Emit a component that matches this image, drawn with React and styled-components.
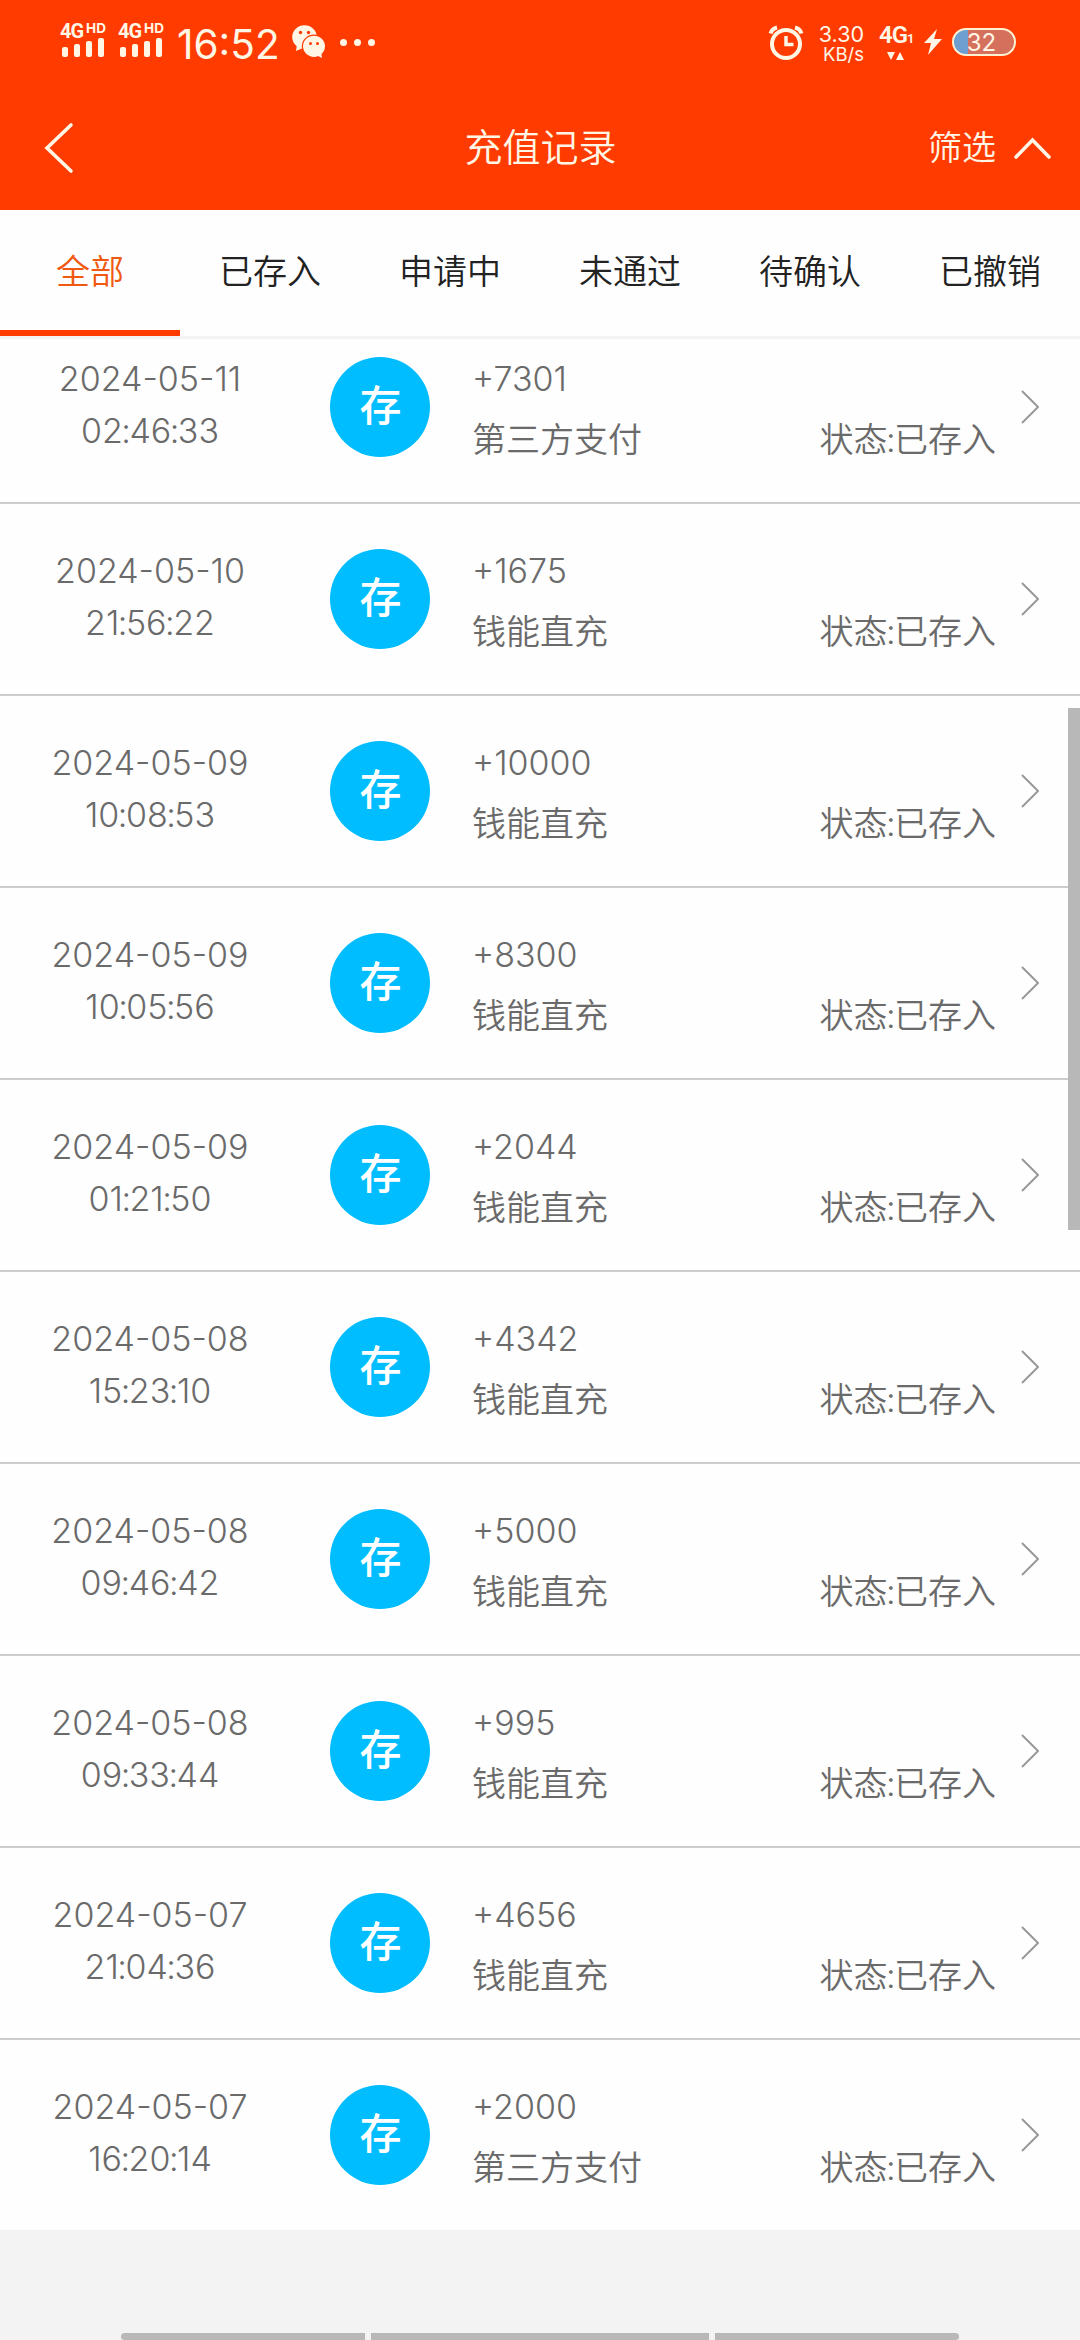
import React from "react";
import styled, { createGlobalStyle } from "styled-components";

const GlobalStyle = createGlobalStyle`
  * {
    box-sizing: border-box;
  }
  body {
    margin: 0;
    background-color: #f3f3f3;
    font-family: Inter, "Noto Sans CJK SC", sans-serif;
    font-weight: 350;
  }
`;

const Page = styled.div`
  position: relative;
  width: 1080px;
  height: 2340px;
  overflow: hidden;
  display: flex;
  flex-direction: column;
  background-color: #f3f3f3;
`;

const StatusBar = styled.div`
  height: 84px;
  padding: 0 64px 0 60px;
  display: flex;
  align-items: center;
  justify-content: space-between;
  background-color: #ff3b00;
  color: #fff6e6;
  .side {
    display: flex;
    align-items: center;
  }
`;

const Signal = styled.div`
  width: 46px;
  margin-right: 12px;
  margin-top: -6px;
  .net {
    display: flex;
    align-items: flex-start;
    height: 17px;
    font-family: Roboto, sans-serif;
    font-size: 20px;
    line-height: 20px;
    font-weight: 700;
    letter-spacing: -1px;
  }
  .net sup {
    font-family: Inter, sans-serif;
    font-size: 13.5px;
    line-height: 14px;
    letter-spacing: 0;
    margin-left: 3px;
  }
  .bars {
    display: flex;
    align-items: flex-end;
    gap: 6px;
    height: 19px;
    padding-left: 2px;
  }
`;

const Bar = styled.i`
  width: 6px;
  height: ${(props) => props.$height}px;
  border-radius: 2px;
  background-color: #fff6e6;
`;

const Clock = styled.span`
  width: 106px;
  margin-left: 1px;
  font-size: 40.5px;
  line-height: 84px;
  font-weight: 400;
  letter-spacing: 0;
  padding-top: 5px;
  white-space: nowrap;
`;

const WechatIcon = styled.svg`
  width: 34px;
  height: 34px;
  margin-left: 9px;
`;

const Dots = styled.div`
  display: flex;
  gap: 7px;
  margin-left: 14px;
  i {
    width: 7px;
    height: 7px;
    border-radius: 50%;
    background-color: #fff6e6;
  }
`;

const Speed = styled.div`
  width: 46px;
  margin-left: 14px;
  padding-top: 3px;
  font-size: 21.5px;
  line-height: 20px;
  font-weight: 400;
  text-align: right;
  white-space: nowrap;
  .unit {
    font-size: 18.5px;
  }
`;

const Network = styled.div`
  width: 36px;
  margin-left: 15px;
  margin-right: 9px;
  .label {
    font-family: Roboto, sans-serif;
    font-size: 24px;
    line-height: 24px;
    font-weight: 600;
    letter-spacing: -1px;
    white-space: nowrap;
  }
  .label small {
    font-size: 13px;
  }
  svg {
    display: block;
    margin-left: 8px;
  }
`;

const Battery = styled.div`
  width: 64px;
  height: 28px;
  margin-left: 10px;
  border: 2px solid #fff0d0;
  border-radius: 14px;
  background: linear-gradient(90deg, #6f9fd0 0 24%, #d5705c 24%);
  font-size: 24px;
  line-height: 25px;
  font-weight: 400;
  text-align: center;
  padding-right: 5px;
`;

const Header = styled.header`
  height: 126px;
  padding: 0 29px 0 44px;
  display: grid;
  grid-template-columns: 200px 1fr 200px;
  align-items: center;
  background-color: #ff3b00;
  color: #fff6e6;
  h1 {
    margin: 0;
    padding-right: 14px;
    font-size: 38px;
    line-height: 127px;
    font-weight: 350;
    text-align: center;
  }
  .filter {
    display: flex;
    align-items: center;
    justify-content: flex-end;
    gap: 18px;
    font-size: 34px;
    line-height: 36px;
  }
`;

const Tabs = styled.nav`
  flex: none;
  display: grid;
  grid-template-columns: repeat(6, 180px);
  height: 129px;
  border-bottom: 3px solid #f3f3f3;
  background-color: #fefefe;
`;

const Tab = styled.div`
  height: 126px;
  border-bottom: 6px solid ${(props) => (props.$active ? "#ff3b00" : "transparent")};
  color: ${(props) => (props.$active ? "#f0590f" : "#222")};
  font-size: 34px;
  line-height: 124px;
  text-align: center;
`;

const RecordList = styled.div`
  flex: none;
  height: 1891px;
  overflow: hidden;
  display: flex;
  flex-direction: column;
  justify-content: flex-end;
  background-color: #fefefe;
`;

const Record = styled.div`
  flex: none;
  display: flex;
  align-items: center;
  height: 192px;
  padding-right: 41px;
  border-bottom: 2px solid #ccc;
  color: #6a6a6a;
  font-size: 34px;
  &:last-child {
    height: 190px;
    border-bottom: none;
  }
  .time {
    width: 300px;
    line-height: 52px;
    text-align: center;
    margin-top: -5px;
  }
  .detail {
    width: 524px;
    margin-left: 42px;
    padding-top: 4px;
    line-height: 61px;
  }
  .line {
    display: flex;
    justify-content: space-between;
  }
`;

const Colon = styled.span`
  margin: 0 -1.5px;
`;

const Badge = styled.div`
  width: 100px;
  height: 100px;
  margin-left: 30px;
  border-radius: 50%;
  background-color: #00bdff;
  color: #fff;
  font-size: 42px;
  line-height: 98px;
  font-weight: 500;
  text-align: center;
  padding-left: 1px;
`;

const Arrow = styled.svg`
  margin-left: auto;
`;

const ScrollThumb = styled.div`
  position: absolute;
  right: 0;
  top: 708px;
  width: 12px;
  height: 522px;
  background-color: #b8b8b8;
`;

const NavHandle = styled.div`
  display: grid;
  grid-template-columns: 244px 338px 244px;
  gap: 6px;
  width: 838px;
  height: 7px;
  margin: auto auto 0;
  i {
    background-color: #b8b8b8;
  }
  i:first-child {
    border-radius: 4px 0 0 4px;
  }
  i:last-child {
    border-radius: 0 4px 4px 0;
  }
`;

const tabs = ["全部", "已存入", "申请中", "未通过", "待确认", "已撤销"];

const records = [
  { date: "2024-05-11", time: "02:46:33", amount: 7301, channel: "第三方支付" },
  { date: "2024-05-10", time: "21:56:22", amount: 1675, channel: "钱能直充" },
  { date: "2024-05-09", time: "10:08:53", amount: 10000, channel: "钱能直充" },
  { date: "2024-05-09", time: "10:05:56", amount: 8300, channel: "钱能直充" },
  { date: "2024-05-09", time: "01:21:50", amount: 2044, channel: "钱能直充" },
  { date: "2024-05-08", time: "15:23:10", amount: 4342, channel: "钱能直充" },
  { date: "2024-05-08", time: "09:46:42", amount: 5000, channel: "钱能直充" },
  { date: "2024-05-08", time: "09:33:44", amount: 995, channel: "钱能直充" },
  { date: "2024-05-07", time: "21:04:36", amount: 4656, channel: "钱能直充" },
  { date: "2024-05-07", time: "16:20:14", amount: 2000, channel: "第三方支付" },
];

const SignalBars = () => (
  <Signal>
    <div className="net">
      4G<sup>HD</sup>
    </div>
    <div className="bars">
      {[10, 13, 16, 19].map((height) => (
        <Bar key={height} $height={height} />
      ))}
    </div>
  </Signal>
);

// text with tighter colons
const Tight = ({ text }) =>
  text.split(":").map((part, index) => (
    <React.Fragment key={index}>
      {index > 0 && <Colon>:</Colon>}
      {part}
    </React.Fragment>
  ));

const App = () => {
  return (
    <Page>
      <GlobalStyle />
      <StatusBar>
        <div className="side">
          <SignalBars />
          <SignalBars />
          <Clock>16:52</Clock>
          <WechatIcon viewBox="0 0 34 34">
            <path d="M5 19l-1 7 7-3z" fill="#fff6e6" />
            <ellipse cx="12.500" cy="12" rx="12.300" ry="11.800" fill="#fff6e6" />
            <circle cx="8.500" cy="7.500" r="1.700" fill="#ff3b00" />
            <circle cx="16.500" cy="7.500" r="1.700" fill="#ff3b00" />
            <ellipse cx="22" cy="21.300" rx="12.200" ry="11.900" fill="#ff3b00" />
            <path d="M24 30l6 3-1-6z" fill="#fff6e6" />
            <ellipse cx="22" cy="21.300" rx="11" ry="10.600" fill="#fff6e6" />
            <circle cx="18.500" cy="18.500" r="1.500" fill="#ff3b00" />
            <circle cx="25.500" cy="18.500" r="1.500" fill="#ff3b00" />
          </WechatIcon>
          <Dots>
            <i />
            <i />
            <i />
          </Dots>
        </div>
        <div className="side">
          <svg width="36" height="36" viewBox="0 0 36 36" fill="none" stroke="#fff6e6">
            <circle cx="18" cy="20" r="14" strokeWidth="4" />
            <path d="M18 12v8.500h7.500" strokeWidth="3.500" />
            <path d="M2.500 9.500a9 9 0 0 1 6.500-6M33.500 9.500a9 9 0 0 0-6.500-6" strokeWidth="4" />
          </svg>
          <Speed>
            <div>3.30</div>
            <div className="unit">KB/s</div>
          </Speed>
          <Network>
            <div className="label">
              4G<small>1</small>
            </div>
            <svg width="18" height="10" viewBox="0 0 18 10" fill="#fff6e6">
              <path d="M0 1h8L4 9zM9 9h8L13 1z" />
            </svg>
          </Network>
          <svg width="18" height="26" viewBox="0 0 18 26" fill="#fff6e6">
            <path d="M13 0L0 14h7L4 26 18 10h-8z" />
          </svg>
          <Battery>32</Battery>
        </div>
      </StatusBar>
      <Header>
        <svg width="30" height="52" viewBox="0 0 30 52" fill="none">
          <path d="M27 3L3 26l24 23" stroke="#fff6e6" strokeWidth="3.600" strokeLinecap="round" />
        </svg>
        <h1>充值记录</h1>
        <div className="filter">
          筛选
          <svg width="37" height="24" viewBox="0 0 37 24" fill="none">
            <path d="M2 21L18.500 4 35 21" stroke="#fff6e6" strokeWidth="3.600" strokeLinecap="round" />
          </svg>
        </div>
      </Header>
      <Tabs>
        {tabs.map((name, index) => (
          <Tab key={name} $active={index === 0}>
            {name}
          </Tab>
        ))}
      </Tabs>
      <RecordList>
        {records.map((item) => (
          <Record key={item.date + item.time}>
            <div className="time">
              <div>{item.date}</div>
              <div>
                <Tight text={item.time} />
              </div>
            </div>
            <Badge>存</Badge>
            <div className="detail">
              <div>+{item.amount}</div>
              <div className="line">
                <span>{item.channel}</span>
                <span>
                  <Tight text="状态:已存入" />
                </span>
              </div>
            </div>
            <Arrow width="18" height="34" viewBox="0 0 18 34" fill="none">
              <path d="M1 1l16 16L1 33" stroke="#999" strokeWidth="2" />
            </Arrow>
          </Record>
        ))}
      </RecordList>
      <ScrollThumb />
      <NavHandle>
        <i />
        <i />
        <i />
      </NavHandle>
    </Page>
  );
};

export default App;
